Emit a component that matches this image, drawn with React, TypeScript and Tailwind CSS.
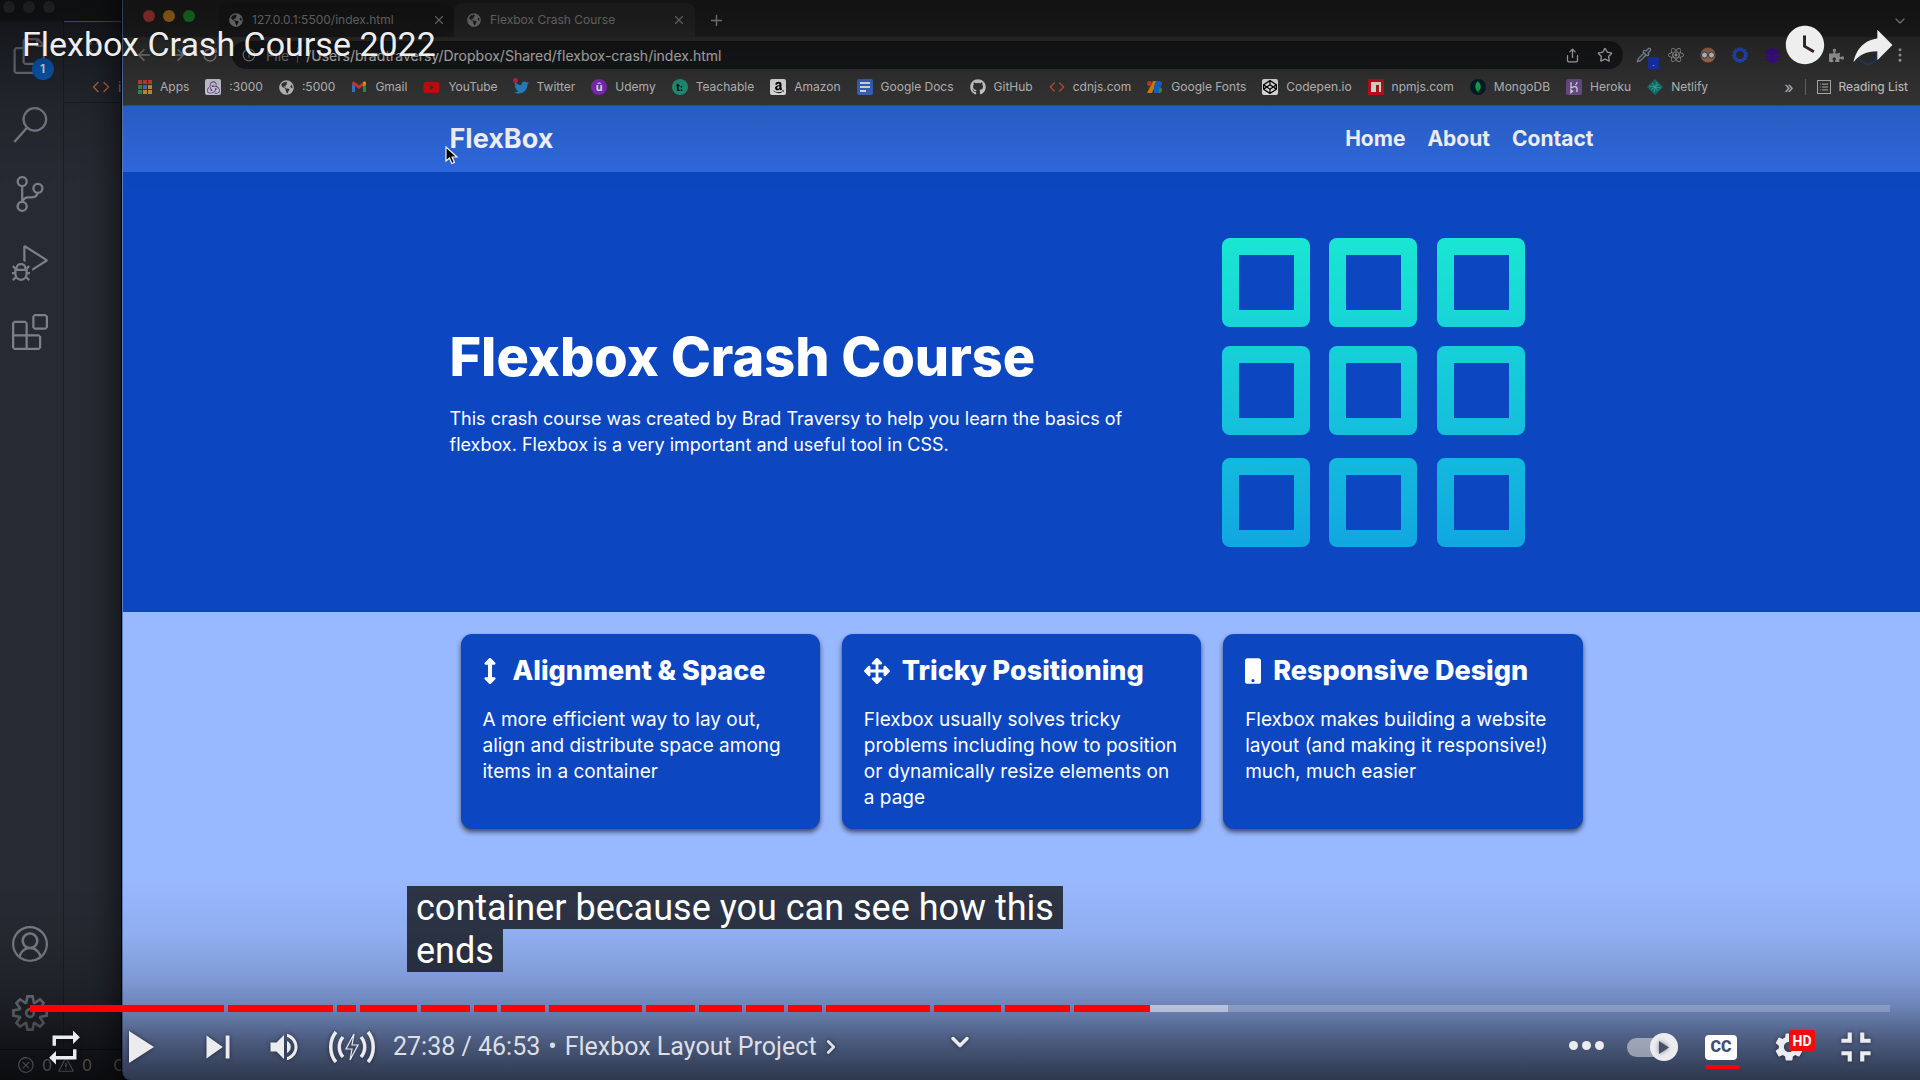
import type { ReactNode } from "react";
import {
  VscAccount,
  VscDebugAlt,
  VscError,
  VscExtensions,
  VscFiles,
  VscSearch,
  VscSettingsGear,
  VscSourceControl,
  VscWarning,
} from "react-icons/vsc";
import {
  FaAmazon,
  FaArrowsAlt,
  FaArrowsAltV,
  FaCodepen,
  FaGithub,
  FaGlobeAmericas,
  FaMobile,
  FaPuzzlePiece,
  FaReact,
  FaTwitter,
  FaYoutube,
} from "react-icons/fa";
import { SiMongodb, SiRedux } from "react-icons/si";
import {
  MdFullscreenExit,
  MdRepeat,
  MdReply,
  MdSettings,
  MdSkipNext,
  MdVolumeUp,
  MdWatchLater,
} from "react-icons/md";
import {
  ArrowLeft,
  ArrowRight,
  ChevronDown,
  ChevronRight,
  Code,
  EllipsisVertical,
  Info,
  Layers,
  List,
  Pipette,
  Plus,
  RotateCw,
  Share,
  Star,
  X,
} from "lucide-react";

/* ---------- Code editor behind the browser ---------- */

const activityItems = [
  { label: "Source control", icon: <VscSourceControl size={36} /> },
  { label: "Run and debug", icon: <VscDebugAlt size={36} /> },
  { label: "Extensions", icon: <VscExtensions size={36} /> },
];

function Editor() {
  return (
    <div className="flex w-[122px] shrink-0 flex-col bg-[#262a32] text-[#7b7f88]">
      <div className="flex h-[21px] shrink-0 items-start gap-2 bg-[#1d2024] pt-[1px] pl-[3px]">
        <span className="size-3 rounded-full bg-[#3c3f45]" />
        <span className="size-3 rounded-full bg-[#3c3f45]" />
        <span className="size-3 rounded-full bg-[#3c3f45]" />
      </div>
      <div className="flex min-h-0 flex-1">
        <nav className="flex w-16 shrink-0 flex-col items-center justify-between border-r border-[#1b1e23] pr-1">
          <div className="flex flex-col items-center gap-[33px] pt-[17px]">
            <button aria-label="Explorer" className="relative">
              <VscFiles size={36} />
              <span className="absolute -right-[6px] -bottom-[6px] flex size-[22px] items-center justify-center rounded-full bg-[#0a63c9] font-['Inter',sans-serif] text-xs font-semibold text-white">
                1
              </span>
            </button>
            <button aria-label="Search">
              <VscSearch size={36} />
            </button>
            {activityItems.map((item) => (
              <button key={item.label} aria-label={item.label}>
                {item.icon}
              </button>
            ))}
          </div>
          <div className="flex flex-col items-center gap-[33px] pb-[18px]">
            <button aria-label="Accounts">
              <VscAccount size={36} />
            </button>
            <button aria-label="Manage">
              <VscSettingsGear size={36} />
            </button>
          </div>
        </nav>
        <div className="flex-1 border-t border-[#d8705c]">
          <div className="flex h-[49px] items-center pl-[22px] text-[#d0713a]">
            <Code size={16} />
          </div>
          <div className="flex h-8 items-center gap-2 border-b border-[#1b1e23] pl-7 font-['Inter',sans-serif] text-sm text-[#9a9ea6]">
            <Code size={18} className="shrink-0 text-[#d0713a]" />
            <span>i</span>
          </div>
        </div>
      </div>
      <div className="flex h-[31px] shrink-0 items-center gap-[7px] border-t border-[#16181c] pl-[17px] font-['Inter',sans-serif] text-base whitespace-nowrap text-[#c2c4c8]">
        <VscError size={18} className="shrink-0" />
        <span>0</span>
        <VscWarning size={18} className="-ml-[2px] shrink-0" />
        <span>0</span>
        <span className="ml-[14px]">C</span>
      </div>
    </div>
  );
}

/* ---------- Browser chrome ---------- */

function AppsIcon() {
  const colors = ["#e0483b", "#e0483b", "#e0483b", "#3f9a5f", "#3f86e0", "#e0a23b", "#3f9a5f", "#e0a23b", "#e0a23b"];
  return (
    <svg width="14" height="14" viewBox="0 0 14 14">
      {colors.map((c, i) => (
        <rect key={i} x={(i % 3) * 5} y={Math.floor(i / 3) * 5} width="4" height="4" fill={c} />
      ))}
    </svg>
  );
}

function GmailIcon() {
  return (
    <svg width="16" height="16" viewBox="0 0 16 16">
      <path d="M1 4v9h3V6z" fill="#4285f4" />
      <path d="M15 4v9h-3V6z" fill="#34a853" />
      <path d="M1 4c0-1.500 1.500-2 2.500-1.200L8 6.200V10L1 5z" fill="#ea4335" />
      <path d="M15 4c0-1.500-1.500-2-2.500-1.200L8 6.200V10l4-3z" fill="#ea4335" />
      <path d="M15 4c0-1.500-1.500-2-3-.900V7.500l3-2z" fill="#fbbc04" />
    </svg>
  );
}

function DocsIcon() {
  return (
    <svg width="16" height="16" viewBox="0 0 16 16">
      <rect width="16" height="16" rx="2" fill="#3f72d6" />
      <path d="M3 4h10M3 8h10M3 12h6" stroke="#fff" strokeWidth="1.800" />
    </svg>
  );
}

function FontsIcon() {
  return (
    <svg width="16" height="16" viewBox="0 0 16 16">
      <path d="M6 2h4L5 14H0z" fill="#f29900" />
      <circle cx="2.500" cy="4.500" r="2.500" fill="#ea4335" />
      <path d="M9 2h3v12H7V7z" fill="#1a73e8" />
      <path d="M12 2a3 3 0 0 1 0 6z" fill="#1a73e8" />
      <path d="M12 8a3 3 0 0 1 0 6z" fill="#34a853" />
    </svg>
  );
}

function HerokuIcon() {
  return (
    <svg width="16" height="16" viewBox="0 0 16 16">
      <rect width="16" height="16" rx="2" fill="#79589f" />
      <path d="M5 3v6c4-2 6-1.500 6 .500V13M5 11v2.500L6.500 12zM11 3c0 1.500-.500 2-1.500 3" stroke="#fff" strokeWidth="1.300" fill="none" />
    </svg>
  );
}

function NetlifyIcon() {
  return (
    <svg width="16" height="16" viewBox="0 0 16 16">
      <path d="M8 0l8 8-8 8-8-8z" fill="#15847b" />
      <path d="M2 7l12 2M5 4l6 8M10 3L7 13M4 11l8-6" stroke="#4fd0c4" strokeWidth=".7" />
    </svg>
  );
}

function NpmIcon() {
  return (
    <svg width="16" height="16" viewBox="0 0 16 16">
      <rect width="16" height="16" fill="#d5121f" />
      <path d="M3 3h10v10h-2V6H8v7H3z" fill="#fff" />
    </svg>
  );
}

function Tile({ className, children }: { className: string; children: ReactNode }) {
  return (
    <span className={`flex size-4 items-center justify-center leading-none font-bold ${className}`}>{children}</span>
  );
}

const bookmarks: { label: string; icon: ReactNode }[] = [
  { label: "Apps", icon: <AppsIcon /> },
  { label: ":3000", icon: <Tile className="rounded-xs bg-[#e9e6ef] text-[#6b45ad]"><SiRedux size={13} /></Tile> },
  { label: ":5000", icon: <FaGlobeAmericas size={15} /> },
  { label: "Gmail", icon: <GmailIcon /> },
  { label: "YouTube", icon: <FaYoutube size={17} color="#f00b12" /> },
  {
    label: "Twitter",
    icon: (
      <span className="relative">
        <FaTwitter size={15} color="#2f96e0" />
        <span className="absolute -top-[2px] -left-[1px] size-[5px] rounded-full bg-[#e0245e]" />
      </span>
    ),
  },
  { label: "Udemy", icon: <Tile className="rounded-full bg-[#9030d0] text-[11px] text-white">û</Tile> },
  { label: "Teachable", icon: <Tile className="rounded-full bg-[#27a586] text-[10px] text-black">t:</Tile> },
  { label: "Amazon", icon: <Tile className="rounded-xs bg-white text-black"><FaAmazon size={13} /></Tile> },
  { label: "Google Docs", icon: <DocsIcon /> },
  { label: "GitHub", icon: <FaGithub size={16} color="#e8e8e8" /> },
  { label: "cdnjs.com", icon: <Code size={16} color="#d9583f" /> },
  { label: "Google Fonts", icon: <FontsIcon /> },
  { label: "Codepen.io", icon: <Tile className="rounded-xs bg-white text-black"><FaCodepen size={14} /></Tile> },
  { label: "npmjs.com", icon: <NpmIcon /> },
  { label: "MongoDB", icon: <Tile className="rounded-full bg-[#04202b] text-[#13c65b]"><SiMongodb size={12} /></Tile> },
  { label: "Heroku", icon: <HerokuIcon /> },
  { label: "Netlify", icon: <NetlifyIcon /> },
];

const extensionIcons: { label: string; icon: ReactNode }[] = [
  {
    label: "Color picker",
    icon: (
      <span className="relative">
        <Pipette size={16} color="#a9b8d8" />
        <span className="absolute -right-[7px] -bottom-[6px] flex h-3 w-[11px] items-center justify-center rounded-xs bg-[#1d3fd8] text-[8px] text-white">
          .
        </span>
      </span>
    ),
  },
  { label: "React tools", icon: <FaReact size={16} color="#d0d0d0" /> },
  {
    label: "Vision",
    icon: (
      <svg width="16" height="16" viewBox="0 0 16 16">
        <circle cx="8" cy="8" r="7.500" fill="#c98660" />
        <circle cx="4.500" cy="8" r="3" fill="#fff" stroke="#456" />
        <circle cx="11.500" cy="8" r="3" fill="#fff" stroke="#456" />
      </svg>
    ),
  },
  {
    label: "Tools",
    icon: (
      <svg width="16" height="16" viewBox="0 0 16 16" fill="none" stroke="#2a5cf0">
        <circle cx="8" cy="8" r="5.500" strokeWidth="3" />
        <circle cx="8" cy="8" r="7.200" strokeWidth="1.500" strokeDasharray="2 1.500" />
      </svg>
    ),
  },
  { label: "Layers", icon: <Layers size={17} color="#4a12a8" fill="#4a12a8" /> },
  {
    label: "Mongo",
    icon: <span className="block size-4 rounded-full bg-[#7a3030]" />,
  },
  { label: "Extensions", icon: <FaPuzzlePiece size={15} color="#c8c8c8" /> },
  {
    label: "Profile",
    icon: <span className="block size-5 rounded-full border-2 border-[#24527a]" />,
  },
  { label: "Menu", icon: <EllipsisVertical size={18} color="#d0d0d0" /> },
];

function BrowserChrome() {
  return (
    <header className="shrink-0 border-b border-[#55504a] bg-[#3a3a3b] font-['Inter',sans-serif] text-[#d6d6d6]">
      <div className="flex h-[37px] bg-[#292929]">
        <div className="flex gap-2 pt-[10px] pr-6 pl-5">
          <span className="size-3 rounded-full bg-[#f0504a]" />
          <span className="size-3 rounded-full bg-[#f5a623]" />
          <span className="size-3 rounded-full bg-[#22b83a]" />
        </div>
        <div className="mt-[3px] flex w-[235px] items-center gap-[9px] rounded-xl bg-[#232323] pb-[1px] pl-[10px] text-[12px] text-[#b8b8b8]">
          <FaGlobeAmericas size={14} />
          <span className="flex-1">127.0.0.1:5500/index.html</span>
          <X size={14} className="mr-2" />
        </div>
        <div className="mt-[3px] flex w-[241px] items-center gap-[9px] rounded-t-lg bg-[#363637] pb-[1px] pl-[13px] text-[12px] text-[#b8b8b8]">
          <FaGlobeAmericas size={14} />
          <span className="flex-1">Flexbox Crash Course</span>
          <X size={14} className="mr-[9px]" />
        </div>
        <button aria-label="New tab" className="ml-[13px] pt-1">
          <Plus size={17} />
        </button>
        <button aria-label="Search tabs" className="mr-3 ml-auto pt-1">
          <ChevronDown size={16} />
        </button>
      </div>

      <div className="flex h-9 items-center">
        <div className="flex w-[109px] items-center justify-between pr-[14px] pl-[12px] text-[#9a9a9a]">
          <ArrowLeft size={18} />
          <ArrowRight size={18} />
          <RotateCw size={16} />
        </div>
        <div className="flex h-7 flex-1 items-center rounded-full bg-[#1b1c1e] pr-[10px] pl-[10px] text-[14px]">
          <Info size={14} className="text-[#9a9a9a]" />
          <span className="ml-[10px] text-[#8a8a8a]">File</span>
          <span className="mx-2 h-4 w-px bg-[#666]" />
          <span className="flex-1 text-[#e4e4e4]">/Users/bradtraversy/Dropbox/Shared/flexbox-crash/index.html</span>
          <Share size={15} className="mr-[17px]" />
          <Star size={16} />
        </div>
        <div className="ml-[5px] flex pr-1">
          {extensionIcons.map((ext) => (
            <button key={ext.label} aria-label={ext.label} className="flex w-8 items-center justify-center">
              {ext.icon}
            </button>
          ))}
        </div>
      </div>

      <div className="flex h-8 items-center pr-3 pb-1 pl-[15px] text-[12px] whitespace-nowrap">
        <nav className="flex items-center gap-4">
          {bookmarks.map((b) => (
            <a key={b.label} href="#" className="flex items-center gap-2">
              {b.icon}
              {b.label}
            </a>
          ))}
        </nav>
        <span className="ml-auto text-base">»</span>
        <span className="mx-[11px] h-4 w-px bg-[#777]" />
        <button className="flex items-center gap-2 text-[#ececec]">
          <span className="flex size-[14px] items-center justify-center border border-[#ccc]">
            <List size={10} />
          </span>
          Reading List
        </button>
      </div>
    </header>
  );
}

/* ---------- Page shown in the browser ---------- */

function boxPath(x: number, y: number) {
  return (
    `M${x + 8} ${y}h72a8 8 0 0 1 8 8v73a8 8 0 0 1-8 8h-72a8 8 0 0 1-8-8v-73a8 8 0 0 1 8-8z` +
    `M${x + 17} ${y + 17}v55h55v-55z`
  );
}

function BoxesArt() {
  const columns = [0, 107, 215];
  const rows = [0, 108, 220];
  return (
    <svg width="303" height="309" viewBox="0 0 303 309" className="shrink-0">
      <defs>
        <linearGradient id="boxes" x1="0" y1="0" x2="0" y2="1">
          <stop offset="0" stopColor="#1ae6d3" />
          <stop offset="1" stopColor="#11a7e1" />
        </linearGradient>
      </defs>
      <path
        fill="url(#boxes)"
        fillRule="evenodd"
        d={rows.flatMap((y) => columns.map((x) => boxPath(x, y))).join("")}
      />
    </svg>
  );
}

const features = [
  {
    title: "Alignment & Space",
    text: "A more efficient way to lay out, align and distribute space among items in a container",
    icon: <FaArrowsAltV className="mr-4 h-[26px] w-[14px]" />,
  },
  {
    title: "Tricky Positioning",
    text: "Flexbox usually solves tricky problems including how to position or dynamically resize elements on a page",
    icon: <FaArrowsAlt className="mr-3 size-[26px]" />,
  },
  {
    title: "Responsive Design",
    text: "Flexbox makes building a website layout (and making it responsive!) much, much easier",
    icon: <FaMobile className="mr-3 h-[26px] w-4" />,
  },
];

function FlexPage() {
  return (
    <main className="flex-1 bg-[#98b8ff] font-['Inter',sans-serif] text-[18px] leading-[26px] text-white">
      <div className="bg-[#2f69de]">
        <div className="mx-auto flex h-[66px] max-w-[1144px] items-center justify-between">
          <a href="#" className="text-[27px] font-bold">
            FlexBox
          </a>
          <nav className="flex gap-[22px] text-[21px] font-bold">
            <a href="#">Home</a>
            <a href="#">About</a>
            <a href="#">Contact</a>
          </nav>
        </div>
      </div>

      <section className="bg-[#0c47c1]">
        <div className="mx-auto flex h-[440px] max-w-[1144px] items-center justify-between pr-[69px]">
          <div className="max-w-[720px] pb-1">
            <h1 className="mb-[14px] text-[54px] leading-[70px] font-extrabold">Flexbox Crash Course</h1>
            <p>
              This crash course was created by Brad Traversy to help you learn the basics of flexbox. Flexbox is a very
              important and useful tool in CSS.
            </p>
          </div>
          <BoxesArt />
        </div>
      </section>

      <section className="mx-auto grid max-w-[1144px] grid-cols-3 gap-[22px] p-[11px] pt-[22px]">
        {features.map((f) => (
          <article
            key={f.title}
            className="rounded-[11px] bg-[#0c47c1] px-[22px] pt-[22px] pb-[18px] shadow-[0_3px_5px_rgba(0,0,0,0.6)]"
          >
            <h3 className="mb-[22px] flex items-center text-[27px] leading-[29px] font-extrabold whitespace-nowrap">
              {f.icon}
              {f.title}
            </h3>
            <p className="text-[19px]">{f.text}</p>
          </article>
        ))}
      </section>
    </main>
  );
}

function Cursor() {
  return (
    <svg width="13" height="19" viewBox="0 0 13 19" className="absolute top-[146px] left-[445px]">
      <path d="M1 1v14l3.500-3 2.300 5.500 2.600-1.100L7.100 11H12z" fill="#000" stroke="#fff" strokeWidth="1.200" />
    </svg>
  );
}

/* ---------- Video player controls ---------- */

const chapters = [195, 106, 19, 58, 49, 23, 45, 93, 50, 43, 38, 34, 105, 68, 65];

function ProgressBar() {
  return (
    <div role="progressbar" aria-label="Playback position" aria-valuenow={59} className="mx-[30px] flex h-[7px] gap-[4px]">
      {chapters.map((length, i) => (
        <span key={i} className="basis-0 bg-[#ff0000]" style={{ flexGrow: length }} />
      ))}
      <span className="flex basis-0" style={{ flexGrow: 822 }}>
        <span className="w-[76px] bg-[#ff0000]" />
        <span className="w-[78px] bg-white/50" />
        <span className="flex-1 bg-white/20" />
      </span>
    </div>
  );
}

function StableVolumeIcon() {
  return (
    <svg width="48" height="32" viewBox="0 0 48 32" fill="none" stroke="currentColor">
      <path d="M8 1C1 9 1 23 8 31M40 1c7 8 7 22 0 30" strokeWidth="3.500" />
      <path d="M15 6c-5 6-5 14 0 20M33 6c5 6 5 14 0 20" strokeWidth="3.500" />
      <path d="M26 3L18 18h6l-2 11 8-15h-6z" strokeWidth="1.200" />
    </svg>
  );
}

function Controls() {
  return (
    <div className="grid h-[68px] grid-cols-[1fr_auto_1fr] items-center pt-[2px] font-['Roboto',sans-serif] text-[25px] text-[#ececf0] [&_svg]:drop-shadow-[0_0_2px_rgba(0,0,0,0.5)]">
      <div className="flex items-center pl-[30px]">
        <button aria-label="Loop" className="flex w-[69px] justify-center">
          <MdRepeat size={41} />
        </button>
        <button aria-label="Play" className="flex w-[84px] justify-center">
          <svg width="25" height="32" viewBox="0 0 25 32" fill="currentColor">
            <path d="M0 0l25 16L0 32z" />
          </svg>
        </button>
        <button aria-label="Next" className="flex w-[70px] justify-center">
          <MdSkipNext size={46} />
        </button>
        <button aria-label="Volume" className="flex w-[62px] justify-center">
          <MdVolumeUp size={36} />
        </button>
        <button aria-label="Stable volume" className="flex w-[74px] justify-center">
          <StableVolumeIcon />
        </button>
        <div className="ml-1 flex items-center gap-2 whitespace-nowrap text-[#dddfe6]">
          <span>27:38 / 46:53</span>
          <span>•</span>
          <button className="flex items-center gap-[3px]">
            Flexbox Layout Project
            <ChevronRight size={22} strokeWidth={3} />
          </button>
        </div>
      </div>

      <button aria-label="Scroll for details" className="pb-[10px]">
        <ChevronDown size={28} strokeWidth={3} />
      </button>

      <div className="flex items-center justify-end pr-[50px]">
        <button aria-label="More" className="flex gap-[4px] pb-1">
          <span className="size-[9px] rounded-full bg-current" />
          <span className="size-[9px] rounded-full bg-current" />
          <span className="size-[9px] rounded-full bg-current" />
        </button>
        <button
          role="switch"
          aria-checked="true"
          aria-label="Autoplay"
          className="ml-[23px] flex h-[19px] w-[51px] items-center justify-end rounded-full bg-white/45"
        >
          <span className="flex size-7 shrink-0 items-center justify-center rounded-full bg-[#ececf0]">
            <svg width="10" height="13" viewBox="0 0 10 13" fill="#43506f">
              <path d="M0 0l10 6.500L0 13z" />
            </svg>
          </span>
        </button>
        <button aria-label="Subtitles" className="relative ml-[27px] w-[35px]">
          <span className="flex h-[25px] w-8 items-center justify-center rounded-sm bg-white text-base leading-none font-black text-[#43506f]">
            CC
          </span>
          <span className="absolute top-[30px] left-0 h-1 w-[35px] rounded-full bg-[#ff0000]" />
        </button>
        <button aria-label="Settings" className="relative ml-8 w-[43px]">
          <MdSettings size={34} />
          <span className="absolute top-0 right-0 flex h-[21px] w-[26px] items-center justify-center rounded-xs bg-[#f20d0d] text-sm leading-none font-bold text-white">
            HD
          </span>
        </button>
        <button aria-label="Exit full screen" className="ml-4 -mr-[11px]">
          <MdFullscreenExit size={50} />
        </button>
      </div>
    </div>
  );
}

function Player() {
  return (
    <div className="absolute inset-0 flex flex-col justify-between">
      <div className="flex h-[200px] items-start justify-between bg-[linear-gradient(to_bottom,rgba(0,0,0,0.55)_0px,rgba(0,0,0,0.5)_20px,rgba(0,0,0,0.4)_40px,rgba(0,0,0,0.25)_72px,rgba(0,0,0,0.13)_106px,rgba(0,0,0,0.02)_172px,transparent_200px)] pt-[19px] pr-[22px] pl-[22px] text-[#eeeeee]">
        <h2 className="pt-[5px] font-['Roboto',sans-serif] text-[34px] leading-10 [text-shadow:0_0_2px_rgba(0,0,0,0.5)]">
          Flexbox Crash Course 2022
        </h2>
        <div className="flex items-center gap-[19px]">
          <button aria-label="Watch later">
            <MdWatchLater size={46} />
          </button>
          <button aria-label="Share" className="-mr-[1px]">
            <MdReply size={52} className="-scale-x-100" />
          </button>
        </div>
      </div>
      <div className="bg-[linear-gradient(to_top,rgba(0,0,0,0.7)_0px,rgba(0,0,0,0.5)_40px,rgba(0,0,0,0.29)_73px,rgba(0,0,0,0.17)_100px,rgba(0,0,0,0.06)_145px,transparent_200px)] pt-[125px]">
        <ProgressBar />
        <Controls />
      </div>
      <p className="absolute bottom-[108px] left-[407px] font-['Roboto',sans-serif] text-[36px] leading-[41px] text-white">
        <span className="block w-fit bg-[#080808]/75 px-[9px] pt-[2px]">container because you can see how this</span>
        <span className="block w-fit bg-[#080808]/75 px-[9px] pt-[2px]">ends</span>
      </p>
    </div>
  );
}

export default function App() {
  return (
    <div className="relative flex h-screen w-full overflow-hidden bg-[#0d0e10]">
      <Editor />
      <div className="relative flex min-w-0 flex-1 flex-col overflow-hidden rounded-bl-lg border-l border-[#5f7fc0] shadow-[-1px_0_0_#000,0_0_30px_6px_rgba(0,0,0,0.6)]">
        <BrowserChrome />
        <FlexPage />
      </div>
      <Cursor />
      <Player />
    </div>
  );
}
